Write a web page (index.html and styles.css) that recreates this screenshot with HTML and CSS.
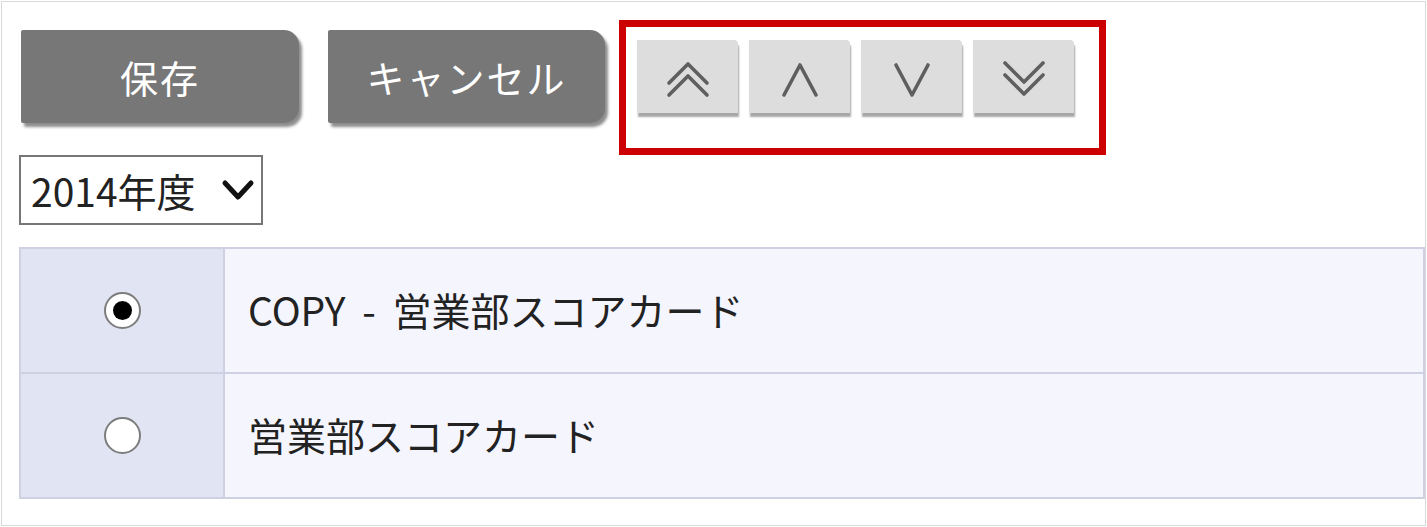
FILE: index.html
```html
<!DOCTYPE html>
<html lang="ja">
<head>
    <meta charset="UTF-8">
    <meta name="viewport" content="width=device-width, initial-scale=1.0">
    <title>スコアカード一覧</title>
    <link rel="stylesheet" href="styles.css">
</head>
<body>

    <div class="frame">
        <div class="toolbar">
            <button class="btn-dark">保存</button>
            <button class="btn-dark">キャンセル</button>

            <!-- order buttons (highlighted) -->
            <div class="move-group">
                <button class="btn-move" title="先頭へ">
                    <svg width="44" height="38" viewBox="0 0 44 38"><polyline points="3,23 22,4 41,23"/><polyline points="3,35 22,16 41,35"/></svg>
                </button>
                <button class="btn-move" title="上へ">
                    <svg width="44" height="38" viewBox="0 0 44 38"><polyline points="6,35 22,5 38,35"/></svg>
                </button>
                <button class="btn-move" title="下へ">
                    <svg width="44" height="38" viewBox="0 0 44 38"><polyline points="6,5 22,35 38,5"/></svg>
                </button>
                <button class="btn-move" title="末尾へ">
                    <svg width="44" height="38" viewBox="0 0 44 38"><polyline points="3,3 22,22 41,3"/><polyline points="3,15 22,34 41,15"/></svg>
                </button>
            </div>
        </div>

        <div class="year-select">
            <span>2014年度</span>
            <svg width="34" height="22" viewBox="0 0 34 22"><polyline points="4,4 17,18 30,4"/></svg>
        </div>

        <table class="card-list">
            <tr>
                <td class="col-radio"><span class="radio checked"></span></td>
                <td class="col-name">COPY - 営業部スコアカード</td>
            </tr>
            <tr>
                <td class="col-radio"><span class="radio"></span></td>
                <td class="col-name">営業部スコアカード</td>
            </tr>
        </table>
    </div>

</body>
</html>
```

FILE: styles.css
```css
/* Reset */
* {
    margin: 0;
    padding: 0;
    box-sizing: border-box;
}

body {
    font-family: "Noto Sans CJK JP", "Liberation Sans", sans-serif;
    background-color: #fff;
    color: #222;
}

.frame {
    margin: 1px;
    width: 1425px;
    height: 525px;
    border: 1px solid #d9d9d9;
    padding: 18px 0 0 17px;
    overflow: hidden;
}

/* Toolbar */
.toolbar {
    display: flex;
    align-items: flex-start;
    height: 135px;
}

.btn-dark {
    margin-top: 10px;
    width: 278px;
    height: 93px;
    background-color: #777;
    color: #fff;
    border: none;
    border-radius: 2px 15px 15px 2px;
    box-shadow: 3px 4px 3px rgba(0, 0, 0, 0.45);
    font-family: inherit;
    font-size: 38px;
    letter-spacing: 2px;
    cursor: pointer;
}

.btn-dark:first-child {
    margin-left: 2px;
    margin-right: 29px;
}

.btn-dark + .btn-dark {
    margin-right: 14px;
    width: 277px;
}

.move-group {
    display: flex;
    gap: 11px;
    border: 7px solid #c00;
    padding: 13px 25px 35px 11px;
}

.btn-move {
    width: 101px;
    height: 73px;
    display: flex;
    align-items: center;
    justify-content: center;
    padding-top: 5px;
    background-color: #ddd;
    border: none;
    border-radius: 0 4px 0 0;
    box-shadow: 1px 4px 2px rgba(0, 0, 0, 0.35);
    cursor: pointer;
}

.btn-move svg polyline {
    fill: none;
    stroke: #5f5f5f;
    stroke-width: 3.6;
    stroke-linecap: round;
    stroke-linejoin: round;
}

/* Year select */
.year-select {
    display: flex;
    align-items: center;
    width: 244px;
    height: 70px;
    border: 2px solid #777;
    padding: 0 6px 0 10px;
    font-size: 39px;
    color: #222;
    background-color: #fff;
}

.year-select svg {
    margin-left: auto;
}

.year-select polyline {
    fill: none;
    stroke: #111;
    stroke-width: 5;
    stroke-linecap: round;
    stroke-linejoin: round;
}

/* Card list */
.card-list {
    margin-top: 22px;
    width: 100%;
    border-collapse: collapse;
    border: 2px solid #cfd1e3;
}

.card-list td {
    height: 125px;
    border: 2px solid #cfd1e3;
}

.col-radio {
    width: 204px;
    background-color: #e1e4f2;
    text-align: center;
}

.col-name {
    background-color: #f4f5fd;
    padding: 0 0 4px 23px;
    font-size: 39px;
    word-spacing: 8px;
    color: #222;
}

.radio {
    display: inline-block;
    position: relative;
    width: 37px;
    height: 37px;
    border: 2px solid #7d7d7d;
    border-radius: 50%;
    background-color: #fff;
    vertical-align: middle;
}

.radio.checked::after {
    content: '';
    position: absolute;
    top: 7px;
    left: 7px;
    width: 19px;
    height: 19px;
    border-radius: 50%;
    background-color: #000;
}
```
